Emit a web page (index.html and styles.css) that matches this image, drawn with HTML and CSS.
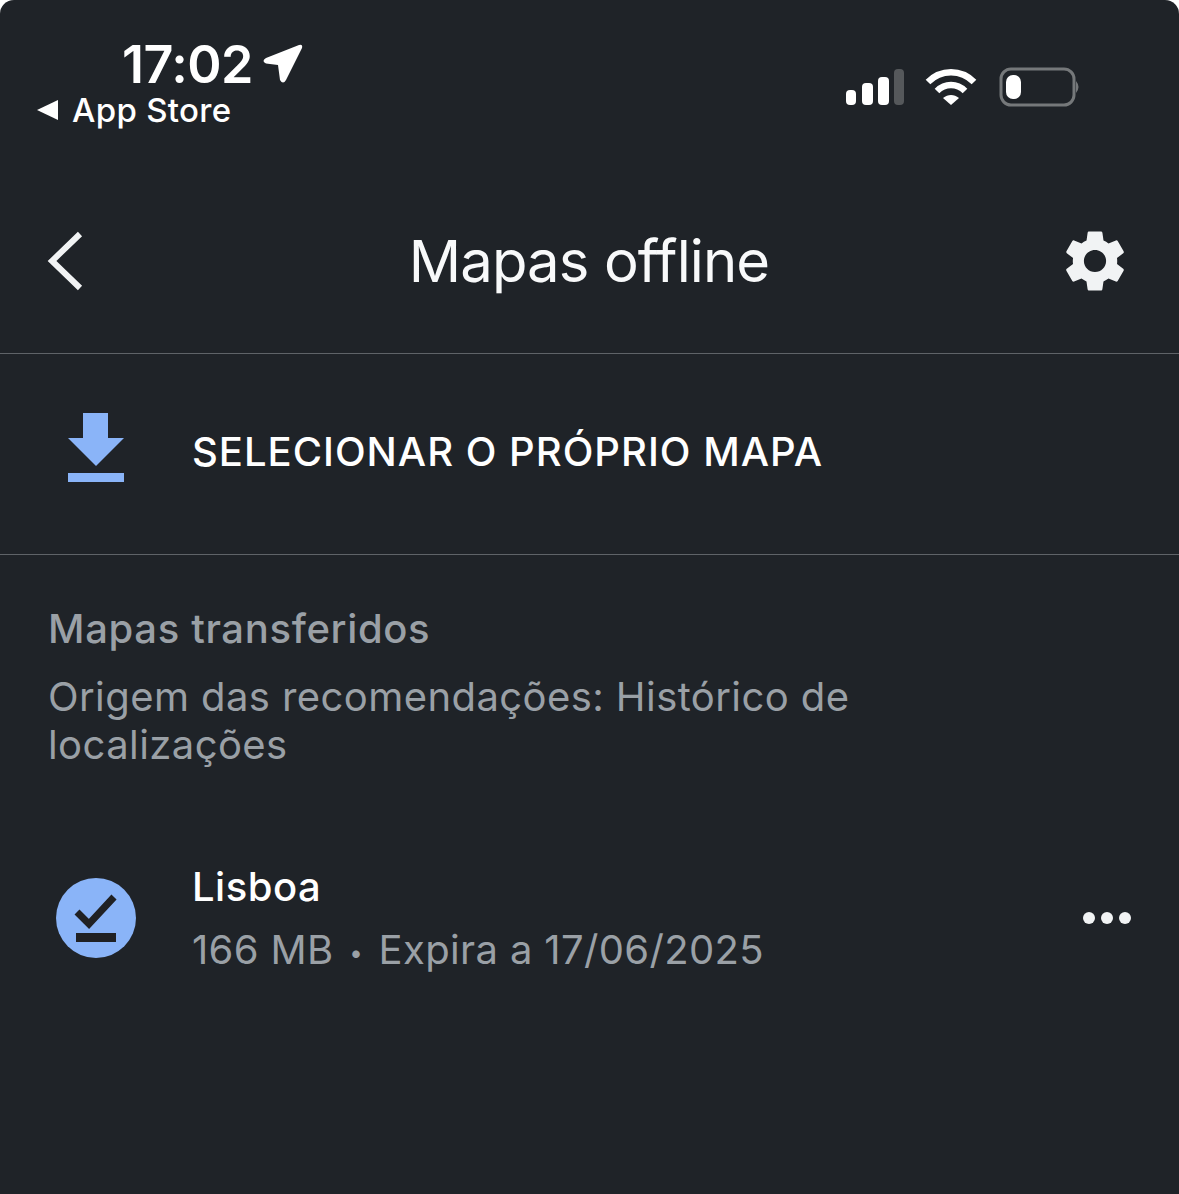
FILE: index.html
```html
<!DOCTYPE html>
<html lang="pt">
<head>
    <meta charset="UTF-8">
    <meta name="viewport" content="width=device-width, initial-scale=1.0">
    <title>Mapas offline</title>
    <link rel="stylesheet" href="styles.css">
</head>
<body>
    <div class="screen">
        <div class="statusbar">
            <div class="status-left">
                <div class="clock">
                    <span class="time">17:02</span>
                    <svg class="location" width="40" height="42" viewBox="0 0 40 42"><path d="M36 2 L3 15 Q-2 18 3 20.5 L15 22 L17 37 Q20 42 23 37 L39 5 Q40 0.5 36 2Z" fill="#fff"/></svg>
                </div>
                <div class="back-app">
                    <svg width="22" height="22" viewBox="0 0 22 22"><path d="M21 1 V21 L0 11Z" fill="#fff"/></svg>
                    <span>App Store</span>
                </div>
            </div>
            <div class="status-right">
                <svg class="signal" width="60" height="38" viewBox="0 0 60 38">
                    <rect x="1" y="22" width="10" height="15" rx="4" fill="#fff"/>
                    <rect x="17" y="15" width="11" height="22" rx="4" fill="#fff"/>
                    <rect x="33" y="9" width="11" height="28" rx="4" fill="#fff"/>
                    <rect x="49" y="1" width="10" height="36" rx="4" fill="#55585b"/>
                </svg>
                <svg width="52" height="38" viewBox="0 0 52 38">
                    <path d="M3 14 C16 1 36 1 49 14" fill="none" stroke="#fff" stroke-width="6.5"/>
                    <path d="M12 23 C20 15 32 15 40 23" fill="none" stroke="#fff" stroke-width="6.5"/>
                    <path d="M26 37 L18 30 C23 26 29 26 34 30Z" fill="#fff"/>
                </svg>
                <svg width="82" height="40" viewBox="0 0 82 40">
                    <rect x="2" y="2" width="73" height="36" rx="10" fill="none" stroke="#75787a" stroke-width="3"/>
                    <rect x="7" y="8" width="15" height="24" rx="7" fill="#fff"/>
                    <path d="M77 14 Q82 20 77 26Z" fill="#75787a"/>
                </svg>
            </div>
        </div>

        <div class="topbar">
            <svg width="40" height="60" viewBox="0 0 40 60"><path d="M34 3 L6 30 L34 57" fill="none" stroke="#f1f3f4" stroke-width="6"/></svg>
            <div class="title">Mapas offline</div>
            <svg width="74" height="74" viewBox="0 0 24 24"><path d="M19.14 12.94c.04-.3.06-.61.06-.94 0-.32-.02-.64-.07-.94l2.03-1.58a.49.49 0 0 0 .12-.61l-1.92-3.32a.488.488 0 0 0-.59-.22l-2.39.96c-.5-.38-1.03-.7-1.62-.94l-.36-2.54a.484.484 0 0 0-.48-.41h-3.84c-.24 0-.43.17-.47.41l-.36 2.54c-.59.24-1.13.57-1.62.94l-2.39-.96c-.22-.08-.47 0-.59.22L2.74 8.87c-.12.21-.08.47.12.61l2.03 1.58c-.05.3-.09.63-.09.94s.02.64.07.94l-2.03 1.58a.49.49 0 0 0-.12.61l1.92 3.32c.12.22.37.29.59.22l2.39-.96c.5.38 1.03.7 1.62.94l.36 2.54c.05.24.24.41.48.41h3.84c.24 0 .44-.17.47-.41l.36-2.54c.59-.24 1.13-.56 1.62-.94l2.39.96c.22.08.47 0 .59-.22l1.92-3.32c.12-.22.07-.47-.12-.61l-2.01-1.58zM12 15.6c-1.98 0-3.6-1.62-3.6-3.6s1.62-3.6 3.6-3.6 3.6 1.62 3.6 3.6-1.62 3.6-3.6 3.6z" fill="#f1f3f4"/></svg>
        </div>

        <div class="select-row">
            <svg class="download-icon" width="58" height="70" viewBox="0 0 58 70">
                <path d="M16 0 H41 V25 H57 L29 53 L1 25 H16Z" fill="#8ab4f8"/>
                <rect x="1" y="60" width="56" height="9" fill="#8ab4f8"/>
            </svg>
            <span>SELECIONAR O PRÓPRIO MAPA</span>
        </div>

        <div class="section">
            <div class="section-title">Mapas transferidos</div>
            <div class="section-note">Origem das recomendações: Histórico de localizações</div>
        </div>

        <div class="map-item">
            <svg width="80" height="80" viewBox="0 0 80 80">
                <circle cx="40" cy="40" r="40" fill="#8ab4f8"/>
                <path d="M21 34 L33 46 L58 19" fill="none" stroke="#202124" stroke-width="7"/>
                <rect x="20" y="55" width="40" height="9" fill="#202124"/>
            </svg>
            <div class="map-info">
                <div class="map-name">Lisboa</div>
                <div class="map-meta">166 MB <span class="sep">•</span> Expira a 17/06/2025</div>
            </div>
            <div class="more"><i></i><i></i><i></i></div>
        </div>
    </div>
</body>
</html>
```

FILE: styles.css
```css
html, body {
    margin: 0;
    height: 100%;
}
body {
    background-color: #fff;
    font-family: Inter, Roboto, sans-serif;
}
.screen {
    height: 1194px;
    overflow: hidden;
    background-color: #1f2328;
    border-radius: 14px 14px 0 0;
    color: #fff;
}
svg {
    display: block;
    flex: none;
}
.statusbar {
    height: 132px;
    display: flex;
    justify-content: space-between;
    padding: 0 98px 0 37px;
    box-sizing: border-box;
}
.status-left {
    padding-top: 37px;
}
.clock {
    display: flex;
    align-items: center;
    gap: 10px;
    padding-left: 85px;
    height: 54px;
}
.time {
    font-size: 52px;
    font-weight: 600;
    letter-spacing: -0.5px;
}
.back-app {
    display: flex;
    align-items: center;
    gap: 13px;
    font-size: 33px;
    font-weight: 500;
    letter-spacing: 0.3px;
    height: 38px;
}
.status-right {
    display: flex;
    align-items: center;
    gap: 22px;
    padding-top: 67px;
    height: 40px;
}
.signal {
    margin-right: -2px;
}
.topbar {
    height: 222px;
    display: flex;
    align-items: center;
    justify-content: space-between;
    padding: 36px 47px 0 46px;
    box-sizing: border-box;
    border-bottom: 1px solid #5f6368;
}
.title {
    font-size: 58px;
    letter-spacing: -0.9px;
    color: #f8f9fa;
    margin-left: 34px;
}
.select-row {
    height: 201px;
    display: flex;
    align-items: center;
    gap: 67px;
    padding: 0 0 6px 67px;
    box-sizing: border-box;
    border-bottom: 1px solid #5f6368;
    font-size: 40px;
    font-weight: 500;
    letter-spacing: 1px;
}
.download-icon {
    margin-bottom: 6px;
}
.section {
    padding: 49px 49px 0 48px;
    color: #9aa0a6;
}
.section-title {
    font-size: 40px;
    font-weight: 500;
    line-height: 50px;
    letter-spacing: 0.65px;
}
.section-note {
    font-size: 40px;
    line-height: 48px;
    letter-spacing: 0.42px;
    margin-top: 19px;
    width: 820px;
}
.map-item {
    display: flex;
    align-items: center;
    margin-top: 88px;
    padding: 0 48px 0 56px;
}
.map-info {
    margin-left: 56px;
    padding-top: 4px;
    flex: 1;
}
.map-name {
    font-size: 40px;
    font-weight: 500;
    line-height: 52px;
    letter-spacing: 0.5px;
}
.map-meta {
    font-size: 40px;
    line-height: 52px;
    letter-spacing: 0.35px;
    color: #9aa0a6;
    margin-top: 11px;
}
.sep {
    font-size: 24px;
    margin: 0 4px;
    vertical-align: 3px;
}
.more {
    display: flex;
    gap: 6px;
}
.more i {
    width: 12px;
    height: 12px;
    border-radius: 50%;
    background-color: #f1f3f4;
}
```
